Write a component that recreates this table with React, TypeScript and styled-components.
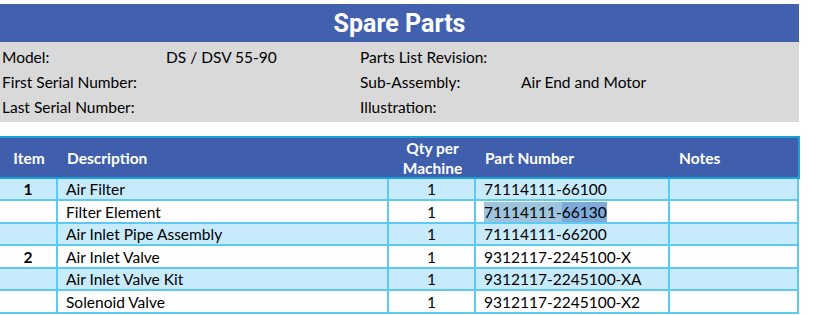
import React from "react";
import styled, { createGlobalStyle } from "styled-components";

const Global = createGlobalStyle`
  html, body { margin: 0; padding: 0; background: #ffffff; }
  body { font-family: "Lato", "Liberation Sans", sans-serif; color: #000; }
`;

const Page = styled.div`
  width: 823px;
  height: 315px;
  padding-top: 4px;
  box-sizing: border-box;
  overflow: hidden;
`;

const TitleBar = styled.div`
  width: 799px;
  height: 38px;
  background: #4161ae;
  color: #fff;
  display: flex;
  align-items: center;
  justify-content: center;
  font-family: "Roboto", "Liberation Sans", sans-serif;
  font-weight: 700;
  font-size: 25px;
  padding-top: 1px;
  box-sizing: border-box;
`;

const InfoPanel = styled.div`
  width: 799px;
  height: 80px;
  background: #d9d9d9;
  display: grid;
  grid-template-columns: 164px 194px 161px 1fr;
  grid-auto-rows: 25px;
  padding: 2px 0 0 2px;
  box-sizing: border-box;
  font-size: 15.5px;
  align-items: center;
`;

const InfoCell = styled.div`
  white-space: nowrap;
`;

const Table = styled.div`
  margin-top: 14px;
  width: 800px;
`;

const cols = "58px 331px 87px 194px 129px";

const HeadRow = styled.div`
  display: grid;
  grid-template-columns: ${cols};
  height: 43px;
  background: #3f5fad;
  border-top: 2px solid #19a3dd;
  border-right: 2px solid #19a3dd;
  border-bottom: 2px solid #19a3dd;
  box-sizing: border-box;
  color: #fff;
  font-weight: 700;
  font-size: 15.5px;
`;

const HeadCell = styled.div<{ $align?: string }>`
  display: flex;
  align-items: center;
  justify-content: ${(p) => p.$align || "flex-start"};
  text-align: ${(p) => (p.$align === "center" ? "center" : "left")};
  padding-left: ${(p) => (p.$align === "center" ? "0" : "9px")};
  line-height: 20px;
`;

const Row = styled.div<{ $shaded: boolean; $h: number }>`
  display: grid;
  grid-template-columns: ${cols};
  height: ${(p) => p.$h}px;
  background: ${(p) => (p.$shaded ? "#c7ebfa" : "#ffffff")};
  border-bottom: 2px solid #5ccaf2;
  box-sizing: border-box;
  width: 799px;
  font-size: 15.5px;
`;

const Cell = styled.div<{ $center?: boolean; $bold?: boolean }>`
  display: flex;
  align-items: center;
  justify-content: ${(p) => (p.$center ? "center" : "flex-start")};
  padding-left: ${(p) => (p.$center ? "0" : "8px")};
  font-weight: ${(p) => (p.$bold ? 700 : 400)};
  border-right: 2px solid #5ccaf2;
  box-sizing: border-box;
  white-space: nowrap;
`;

const Sel = styled.span`
  background: #9ec4dd;
  padding: 1px 0;
`;
const SelDark = styled.span`
  background: #7eaad9;
  padding: 1px 0;
`;

type Part = { item: string; desc: string; qty: string; part: React.ReactNode };

const parts: Part[] = [
  { item: "1", desc: "Air Filter", qty: "1", part: "71114111-66100" },
  {
    item: "",
    desc: "Filter Element",
    qty: "1",
    part: (
      <span>
        <Sel>71114111-</Sel>
        <SelDark>66130</SelDark>
      </span>
    ),
  },
  { item: "", desc: "Air Inlet Pipe Assembly", qty: "1", part: "71114111-66200" },
  { item: "2", desc: "Air Inlet Valve", qty: "1", part: "9312117-2245100-X" },
  { item: "", desc: "Air Inlet Valve Kit", qty: "1", part: "9312117-2245100-XA" },
  { item: "", desc: "Solenoid Valve", qty: "1", part: "9312117-2245100-X2" },
];

export default function App() {
  return (
    <Page>
      <Global />
      <TitleBar>Spare Parts</TitleBar>
      <InfoPanel>
        <InfoCell>Model:</InfoCell>
        <InfoCell>DS / DSV 55-90</InfoCell>
        <InfoCell>Parts List Revision:</InfoCell>
        <InfoCell></InfoCell>
        <InfoCell>First Serial Number:</InfoCell>
        <InfoCell></InfoCell>
        <InfoCell>Sub-Assembly:</InfoCell>
        <InfoCell>Air End and Motor</InfoCell>
        <InfoCell>Last Serial Number:</InfoCell>
        <InfoCell></InfoCell>
        <InfoCell>Illustration:</InfoCell>
        <InfoCell></InfoCell>
      </InfoPanel>
      <Table>
        <HeadRow>
          <HeadCell $align="center">Item</HeadCell>
          <HeadCell>Description</HeadCell>
          <HeadCell $align="center">
            Qty per
            <br />
            Machine
          </HeadCell>
          <HeadCell>Part Number</HeadCell>
          <HeadCell>Notes</HeadCell>
        </HeadRow>
        {parts.map((p, i) => (
          <Row key={i} $shaded={i % 2 === 0} $h={i % 2 === 0 ? 22 : 23}>
            <Cell $center $bold>{p.item}</Cell>
            <Cell>{p.desc}</Cell>
            <Cell $center>{p.qty}</Cell>
            <Cell>{p.part}</Cell>
            <Cell></Cell>
          </Row>
        ))}
      </Table>
    </Page>
  );
}
